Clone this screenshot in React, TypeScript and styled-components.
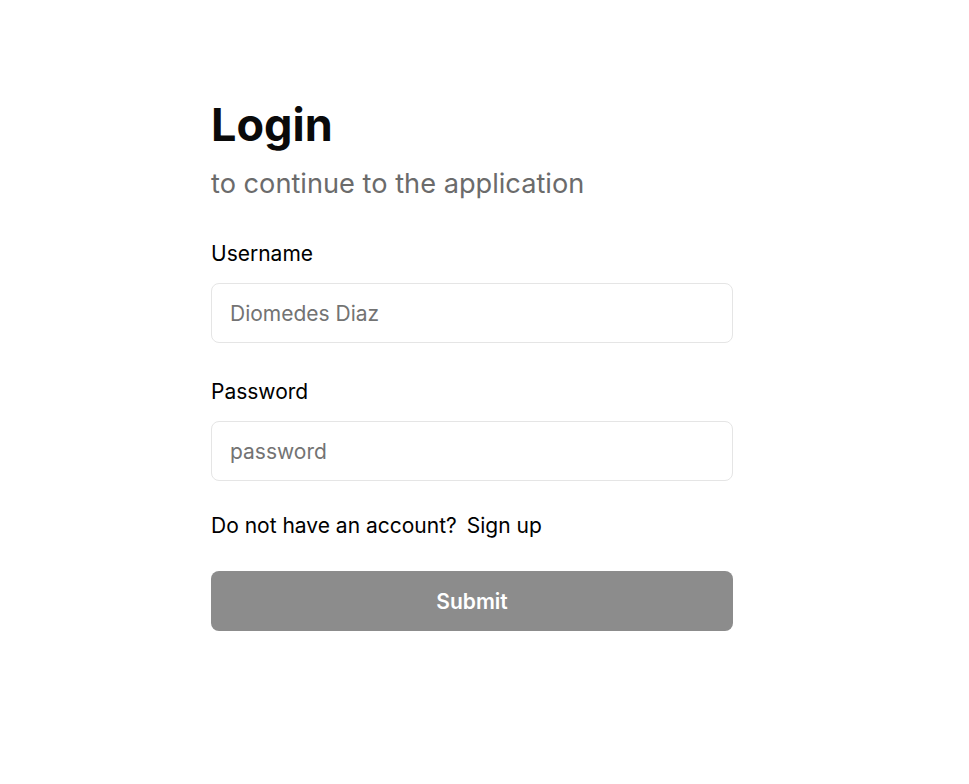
import React from "react";
import styled, { createGlobalStyle } from "styled-components";

const Global = createGlobalStyle`
  html, body { margin: 0; padding: 0; background: #ffffff; }
  body { font-family: Inter, "Noto Sans", sans-serif; color: #000; }
  * { box-sizing: border-box; }
`;

const Page = styled.main`
  display: flex;
  padding: 98px 0 0 211px;
`;

const Form = styled.form`
  width: 522px;
  display: flex;
  flex-direction: column;
`;

const Title = styled.h1`
  margin: 0;
  font-size: 45px;
  font-weight: 700;
  line-height: 54px;
  color: #0a0a0a;
`;

const Subtitle = styled.p`
  margin: 16px 0 0;
  font-size: 27.2px;
  line-height: 32px;
  color: #6b6b6b;
`;

const Field = styled.div`
  display: flex;
  flex-direction: column;
  gap: 17px;
  margin-top: ${(p: { $top: number }) => p.$top}px;
`;

const Label = styled.label`
  font-size: 21px;
  line-height: 24px;
  color: #000;
`;

const Input = styled.input`
  width: 100%;
  height: 60px;
  padding: 0 18px;
  border: 1px solid #e5e5e5;
  border-radius: 8px;
  font-family: Inter, "Noto Sans", sans-serif;
  font-size: 21px;
  color: #000;
  background: #fff;
  outline: none;
  &::placeholder { color: #737373; }
`;

const SignupRow = styled.p`
  margin: 33px 0 0;
  font-size: 21px;
  line-height: 24px;
  display: flex;
  gap: 10px;
`;

const SignupLink = styled.a`
  color: #000;
  text-decoration: none;
`;

const Submit = styled.button`
  margin-top: 33px;
  height: 60px;
  border: none;
  border-radius: 8px;
  background: #8c8c8c;
  color: #fff;
  font-family: Inter, "Noto Sans", sans-serif;
  font-size: 21px;
  font-weight: 600;
`;

export default function App() {
  return (
    <>
      <Global />
      <Page>
        <Form onSubmit={(e) => e.preventDefault()}>
          <Title>Login</Title>
          <Subtitle>to continue to the application</Subtitle>
          <Field $top={42}>
            <Label htmlFor="username">Username</Label>
            <Input id="username" placeholder="Diomedes Diaz" />
          </Field>
          <Field $top={37}>
            <Label htmlFor="password">Password</Label>
            <Input id="password" type="password" placeholder="password" />
          </Field>
          <SignupRow>
            <span>Do not have an account?</span>
            <SignupLink href="#">Sign up</SignupLink>
          </SignupRow>
          <Submit type="submit" disabled>Submit</Submit>
        </Form>
      </Page>
    </>
  );
}
